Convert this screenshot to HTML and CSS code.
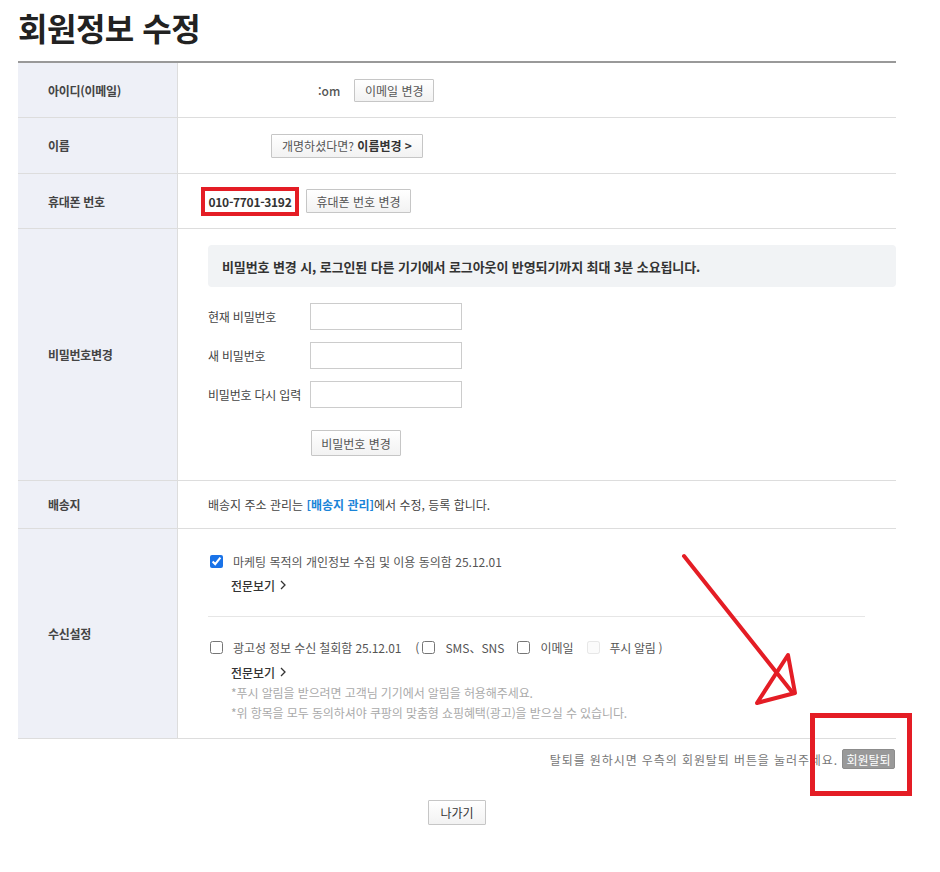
FILE: index.html
```html
<!DOCTYPE html>
<html lang="ko">
<head>
<meta charset="utf-8">
<title>회원정보 수정</title>
<link rel="stylesheet" href="styles.css">
</head>
<body>
<div class="page">
  <h1 class="title">회원정보 수정</h1>

  <div class="form-table">
    <div class="row row-id">
      <div class="label">아이디(이메일)</div>
      <div class="cell">
        <span class="email-tail">:om</span>
        <button class="btn btn-email">이메일 변경</button>
      </div>
    </div>

    <div class="row row-name">
      <div class="label">이름</div>
      <div class="cell">
        <button class="btn btn-rename">개명하셨다면? <b>이름변경 &gt;</b></button>
      </div>
    </div>

    <div class="row row-phone">
      <div class="label">휴대폰 번호</div>
      <div class="cell cell-phone">
        <span class="phone">010-7701-3192</span>
        <button class="btn btn-phone">휴대폰 번호 변경</button>
      </div>
    </div>

    <div class="row row-pw">
      <div class="label">비밀번호변경</div>
      <div class="cell cell-pw">
        <div class="notice">비밀번호 변경 시, 로그인된 다른 기기에서 로그아웃이 반영되기까지 최대 3분 소요됩니다.</div>
        <div class="pw-field"><span class="pw-label">현재 비밀번호</span><input type="password" class="pw-input"></div>
        <div class="pw-field"><span class="pw-label">새 비밀번호</span><input type="password" class="pw-input"></div>
        <div class="pw-field"><span class="pw-label">비밀번호 다시 입력</span><input type="password" class="pw-input"></div>
        <button class="btn btn-pw">비밀번호 변경</button>
      </div>
    </div>

    <div class="row row-addr">
      <div class="label">배송지</div>
      <div class="cell">
        <span class="text">배송지 주소 관리는 <a class="link" href="#">[배송지 관리]</a>에서 수정, 등록 합니다.</span>
      </div>
    </div>

    <div class="row row-recv">
      <div class="label">수신설정</div>
      <div class="cell cell-recv">
        <div class="agree">
          <label class="agree-line"><input type="checkbox" class="chk" checked><span>마케팅 목적의 개인정보 수집 및 이용 동의함 25.12.01</span></label>
          <a class="more" href="#">전문보기 <svg class="chev" viewBox="0 0 6 10" width="6" height="10"><path d="M1 1l4 4-4 4" fill="none" stroke="#333" stroke-width="1.3"/></svg></a>
        </div>
        <div class="divider"></div>
        <div class="agree agree-2">
          <div class="agree-line">
            <input type="checkbox" class="chk">
            <span class="main-2">광고성 정보 수신 철회함 25.12.01</span>
            <span class="paren">(</span>
            <input type="checkbox" class="chk chk-sub">
            <span class="sub">SMS、SNS</span>
            <input type="checkbox" class="chk chk-sub">
            <span class="sub">이메일</span>
            <input type="checkbox" class="chk chk-sub chk-dis" disabled>
            <span class="sub sub-push">푸시 알림 )</span>
          </div>
          <a class="more" href="#">전문보기 <svg class="chev" viewBox="0 0 6 10" width="6" height="10"><path d="M1 1l4 4-4 4" fill="none" stroke="#333" stroke-width="1.3"/></svg></a>
          <p class="note">*푸시 알림을 받으려면 고객님 기기에서 알림을 허용해주세요.</p>
          <p class="note">*위 항목을 모두 동의하셔야 쿠팡의 맞춤형 쇼핑혜택(광고)을 받으실 수 있습니다.</p>
        </div>
      </div>
    </div>
  </div>

  <div class="withdraw">
    <span class="withdraw-text">탈퇴를 원하시면 우측의 회원탈퇴 버튼을 눌러주세요.</span>
    <button class="btn-withdraw">회원탈퇴</button>
  </div>

  <div class="exit-wrap">
    <button class="btn btn-exit">나가기</button>
  </div>
</div>

<svg class="annot" width="940" height="872" viewBox="0 0 940 872">
  <line x1="684" y1="556" x2="792" y2="692" stroke="#e41d25" stroke-width="4" stroke-linecap="round"/>
  <polygon points="757,703 788,655 795,693" fill="none" stroke="#e41d25" stroke-width="4" stroke-linejoin="round"/>
  <rect x="812.5" y="715.5" width="97" height="78" fill="none" stroke="#e41d25" stroke-width="5"/>
</svg>
</body>
</html>
```

FILE: styles.css
```css
* { box-sizing: border-box; }

html, body {
  margin: 0;
  padding: 0;
  background: #fff;
}

body {
  font-family: "Noto Sans CJK KR", "Noto Sans", sans-serif;
  font-size: 12px;
  color: #333;
  position: relative;
  width: 940px;
  min-height: 872px;
}

.page {
  width: 878px;
  margin-left: 18px;
}

.title {
  margin: 0 0 14px;
  height: 47px;
  line-height: 40px;
  padding-top: 7px;
  font-size: 32px;
  font-weight: 700;
  letter-spacing: -0.5px;
  color: #222;
}

.form-table {
  border-top: 2px solid #999;
}

.row {
  display: grid;
  grid-template-columns: 160px 1fr;
  border-bottom: 1px solid #ddd;
}

.label {
  background: #eef0f7;
  border-right: 1px solid #ddd;
  padding-left: 30px;
  display: flex;
  align-items: center;
  font-weight: 700;
  color: #444;
  letter-spacing: -0.3px;
}

.cell {
  padding-left: 30px;
  display: flex;
  align-items: center;
}

.row-id { height: 55px; }
.row-name { height: 56px; }
.row-phone { height: 55px; }
.row-addr { height: 48px; }

.btn {
  font-family: inherit;
  font-size: 12px;
  color: #555;
  background: linear-gradient(#ffffff, #f2f2f2);
  border: 1px solid #c6c6c6;
  border-radius: 1px;
  padding: 0 9px;
  cursor: pointer;
}

.email-tail {
  margin-left: 110px;
  color: #555;
  font-weight: 500;
}

.btn-email {
  margin-left: 14px;
  height: 23px;
  width: 80px;
  padding: 0;
}

.btn-rename {
  margin-left: 63px;
  height: 24px;
  width: 152px;
  padding: 0;
}
.btn-rename b { color: #333; }

.cell-phone { padding-left: 23px; }

.phone {
  display: inline-flex;
  align-items: center;
  height: 29px;
  width: 98px;
  justify-content: center;
  border: 4px solid #e41d25;
  font-weight: 700;
  color: #333;
  letter-spacing: -0.3px;
}

.btn-phone {
  margin-left: 7px;
  height: 24px;
  width: 105px;
  padding: 0;
}

.cell-pw {
  flex-direction: column;
  align-items: flex-start;
  padding: 16px 0 24px 30px;
}

.notice {
  width: 100%;
  height: 42px;
  background: #f1f3f5;
  border-radius: 4px;
  padding-left: 14px;
  display: flex;
  align-items: center;
  font-weight: 700;
  font-size: 13px;
  color: #333;
  letter-spacing: -0.1px;
  margin-bottom: 16px;
}

.pw-field {
  display: flex;
  align-items: center;
  margin-bottom: 12px;
}

.pw-label {
  width: 102px;
  color: #444;
  letter-spacing: -0.2px;
}

.pw-input {
  width: 152px;
  height: 27px;
  border: 1px solid #ccc;
  margin: 0;
  padding: 0 4px;
  background: #fff;
}

.btn-pw {
  margin-top: 10px;
  margin-left: 103px;
  height: 26px;
  width: 90px;
  padding: 0;
}

.text {
  color: #444;
}

.link {
  color: #1a84d8;
  font-weight: 700;
  text-decoration: none;
}

.cell-recv {
  flex-direction: column;
  align-items: stretch;
  padding: 23px 31px 15px 30px;
}

.agree-line {
  display: flex;
  align-items: center;
  height: 18px;
  color: #555;
}

.chk {
  width: 13px;
  height: 13px;
  margin: 0 10px 0 2px;
  accent-color: #1a73e8;
}

.more {
  display: inline-flex;
  align-items: center;
  height: 18px;
  margin: 6px 0 0 23px;
  color: #333;
  font-weight: 500;
  text-decoration: none;
}

.chev { margin-left: 5px; }

.divider {
  height: 1px;
  background: #e6e6e6;
  margin-top: 22px;
}

.agree-2 { margin-top: 21px; }
.agree-2 .more { margin-top: 7px; }

.main-2 { letter-spacing: -0.1px; }
.paren { margin-left: 14px; margin-right: 0; }
.chk-sub { margin: 0 10px 0 3px; }
.sub { margin-right: 10px; }
.sub-push { margin-right: 0; letter-spacing: -0.3px; }
.chk-dis { opacity: 0.5; }

.note {
  margin: 0 0 0 23px;
  line-height: 20px;
  color: #aaa;
  letter-spacing: -0.1px;
}
.note:first-of-type { margin-top: 2px; }

.withdraw {
  display: flex;
  justify-content: flex-end;
  align-items: center;
  gap: 4px;
  margin-top: 10px;
  height: 20px;
}

.withdraw-text {
  color: #777;
  letter-spacing: 0.9px;
}

.btn-withdraw {
  font-family: inherit;
  font-size: 12px;
  height: 20px;
  width: 53px;
  padding: 0;
  margin-right: 1px;
  border: 1px solid #8c8c8c;
  border-radius: 2px;
  background: #999;
  color: #fff;
}

.exit-wrap {
  display: flex;
  justify-content: center;
  margin-top: 31px;
}

.btn-exit {
  height: 25px;
  width: 58px;
  padding: 0;
  color: #333;
}

.annot {
  position: absolute;
  left: 0;
  top: 0;
  pointer-events: none;
}
```
